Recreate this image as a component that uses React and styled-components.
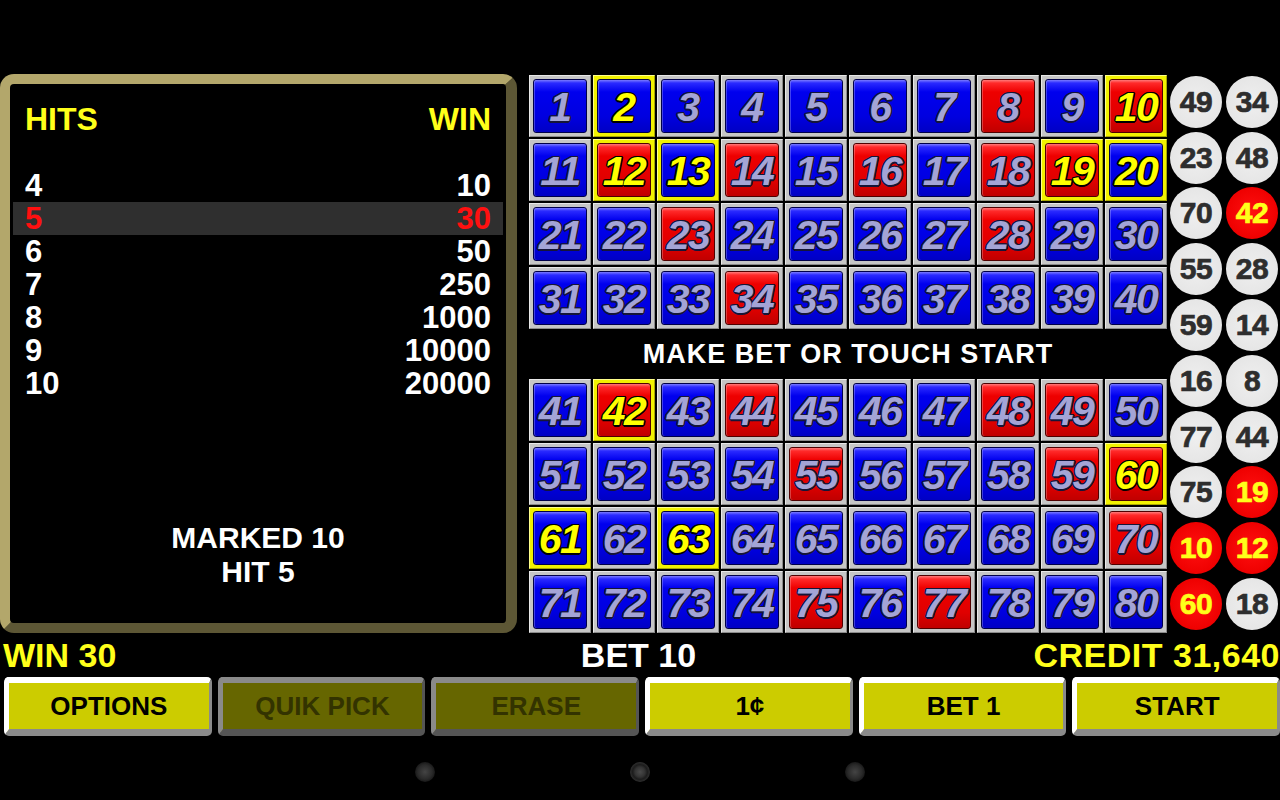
import styled, { createGlobalStyle, css } from 'styled-components';

const marked = [2, 10, 12, 13, 19, 20, 42, 60, 61, 63];
const drawn = [49, 34, 23, 48, 70, 42, 55, 28, 59, 14, 16, 8, 77, 44, 75, 19, 10, 12, 60, 18];

const payTable = [
    [4, 10],
    [5, 30],
    [6, 50],
    [7, 250],
    [8, 1000],
    [9, 10000],
    [10, 20000],
];
const hits = marked.filter(n => drawn.includes(n)).length;

const buttons = [
    { label: 'OPTIONS', off: false },
    { label: 'QUIK PICK', off: true },
    { label: 'ERASE', off: true },
    { label: '1¢', off: false },
    { label: 'BET 1', off: false },
    { label: 'START', off: false },
];

const Global = createGlobalStyle`
    html, body {
        margin: 0;
        padding: 0;
        background: #000;
        overflow: hidden;
    }
    body {
        font-family: 'Liberation Sans', Arial, sans-serif;
    }
`

export default function App() {
    const top = [];
    const bottom = [];
    for (let n = 1; n <= 80; n++) {
        (n <= 40 ? top : bottom).push(n);
    }

    function renderCell(n) {
        const isMarked = marked.includes(n);
        const isDrawn = drawn.includes(n);
        return (
            <Cell key={n} marked={isMarked}>
                <Tile drawn={isDrawn}>
                    <Num marked={isMarked}>{n}</Num>
                </Tile>
            </Cell>
        );
    }

    return (
        <Screen>
            <Global />
            <Main>
                <PayPanel>
                    <PayInner>
                        <PayHead>
                            <span>HITS</span>
                            <span>WIN</span>
                        </PayHead>
                        <PayRows>
                            {payTable.map(([h, w]) => (
                                <PayRow key={h} active={h === hits}>
                                    <span>{h}</span>
                                    <span>{w}</span>
                                </PayRow>
                            ))}
                        </PayRows>
                        <Summary>
                            MARKED {marked.length}
                            <br />
                            HIT {hits}
                        </Summary>
                    </PayInner>
                </PayPanel>

                <Board>
                    <CellGrid>{top.map(renderCell)}</CellGrid>
                    <Message>MAKE BET OR TOUCH START</Message>
                    <CellGrid>{bottom.map(renderCell)}</CellGrid>
                </Board>

                <Balls>
                    {drawn.map(n => (
                        <BallSlot key={n}>
                            <Ball hit={marked.includes(n)}>{n}</Ball>
                        </BallSlot>
                    ))}
                </Balls>
            </Main>

            <Status>
                <WinText>WIN 30</WinText>
                <BetText>BET 10</BetText>
                <CreditText>CREDIT 31,640</CreditText>
            </Status>

            <ButtonBar>
                {buttons.map(b => (
                    <GameButton key={b.label} off={b.off}>{b.label}</GameButton>
                ))}
            </ButtonBar>

            <NavBar>
                <NavDot />
                <NavDot ring />
                <NavDot />
            </NavBar>
        </Screen>
    )
}

const Screen = styled.div`
    width: 1280px;
    height: 800px;
    background: #000;
    overflow: hidden;
`
const Main = styled.div`
    display: flex;
    margin-top: 74px;
    height: 560px;
`
const PayPanel = styled.div`
    width: 517px;
    height: 559px;
    box-sizing: border-box;
    border-style: solid;
    border-width: 10px 11px 10px 10px;
    border-color: #b3a76b #5d5735 #5d5735 #b3a76b;
    border-radius: 14px;
    background: #000;
`
const PayInner = styled.div`
    height: 100%;
    display: flex;
    flex-direction: column;
    padding: 0 3px;
    box-sizing: border-box;
    border-radius: 5px;
    font-weight: 700;
    font-size: 31px;
`
const PayHead = styled.div`
    display: flex;
    justify-content: space-between;
    padding: 0 12px;
    margin-top: 17px;
    height: 36px;
    line-height: 36px;
    color: #ffff1a;
    font-size: 32px;
`
const PayRows = styled.div`
    margin-top: 32px;
    display: flex;
    flex-direction: column;
`
const PayRow = styled.div`
    display: flex;
    justify-content: space-between;
    padding: 0 12px;
    height: 33px;
    line-height: 34px;
    color: ${props => props.active ? '#ff1010' : '#ffffff'};
    background: ${props => props.active ? '#2f2f2f' : 'transparent'};
`
const Summary = styled.div`
    margin-top: auto;
    padding-bottom: 34px;
    text-align: center;
    color: #fff;
    font-size: 30px;
    line-height: 34px;
`
const Board = styled.div`
    margin-left: 11px;
    width: 640px;
    display: flex;
    flex-direction: column;
`
const CellGrid = styled.div`
    display: grid;
    grid-template-columns: repeat(10, 64px);
    grid-auto-rows: 64px;
`
const Cell = styled.div`
    margin: 1px;
    box-sizing: border-box;
    border: 1px solid;
    padding: 3px;
    ${props => props.marked ? css`
        background: #f2f200;
        border-color: #ffff8c #a8a800 #a8a800 #ffff8c;
    ` : css`
        background: #c6c6c6;
        border-color: #e8e8e8 #8a8a8a #8a8a8a #e8e8e8;
    `}
`
const Tile = styled.div`
    height: 100%;
    box-sizing: border-box;
    border: 1px solid ${props => props.drawn ? '#500000' : '#00004a'};
    border-radius: 3px;
    display: flex;
    align-items: center;
    justify-content: center;
    background: ${props => props.drawn
        ? 'linear-gradient(to bottom, #ff7a7a 0px, #ff2a2a 3px, #ee0000 12px, #e00000 70%, #c00000 100%)'
        : 'linear-gradient(to bottom, #7a7aff 0px, #2a2aff 3px, #0000ee 12px, #0000e0 70%, #0000c4 100%)'};
    box-shadow: inset 1px 0 0 rgba(255, 255, 255, 0.25);
`
const Num = styled.span`
    font-style: italic;
    font-weight: 700;
    font-size: 41px;
    letter-spacing: -1.5px;
    line-height: 1;
    margin-top: 2px;
    color: ${props => props.marked ? '#ffff00' : '#a4a4d6'};
    text-shadow: ${props => {
        const c = props.marked ? '#000' : '#151538';
        return `1.5px 0 0 ${c}, -1.5px 0 0 ${c}, 0 1.5px 0 ${c}, 0 -1.5px 0 ${c}, 1px 1px 0 ${c}, -1px -1px 0 ${c}, 1px -1px 0 ${c}, -1px 1px 0 ${c}`;
    }};
`
const Message = styled.div`
    height: 48px;
    line-height: 48px;
    text-align: center;
    color: #fff;
    font-weight: 700;
    font-size: 27px;
    letter-spacing: 1px;
`
const Balls = styled.div`
    width: 112px;
    height: 558px;
    display: grid;
    grid-template-columns: 56px 56px;
    grid-template-rows: repeat(10, 1fr);
`
const BallSlot = styled.div`
    display: flex;
    align-items: center;
    justify-content: center;
`
const Ball = styled.div`
    width: 52px;
    height: 52px;
    border-radius: 50%;
    display: flex;
    align-items: center;
    justify-content: center;
    font-weight: 700;
    font-size: 30px;
    letter-spacing: -0.5px;
    -webkit-text-stroke: 0.7px currentColor;
    color: ${props => props.hit ? '#ffff1a' : '#2e2e2e'};
    background: ${props => props.hit
        ? 'radial-gradient(circle, #ff1010 0%, #ee0000 72%, #b00000 86%, #3a0000 96%, #000 100%)'
        : 'radial-gradient(circle, #efefef 0%, #e6e6e6 70%, #c0c0c0 84%, #5e5e5e 95%, #000 100%)'};
`
const Status = styled.div`
    height: 43px;
    display: grid;
    grid-template-columns: 1fr auto 1fr;
    align-items: center;
    font-weight: 700;
    font-size: 34px;
    padding: 0 0 0 3px;
`
const WinText = styled.div`
    color: #ffff1a;
    justify-self: start;
`
const BetText = styled.div`
    color: #fff;
    margin-left: -6px;
`
const CreditText = styled.div`
    color: #ffff1a;
    justify-self: end;
    letter-spacing: 0.5px;
`
const ButtonBar = styled.div`
    display: flex;
    gap: 6px;
    padding-left: 4px;
    height: 59px;
`
const GameButton = styled.div`
    flex: 1;
    box-sizing: border-box;
    border-style: solid;
    border-width: 6px 3px 7px 5px;
    border-radius: 5px;
    display: flex;
    align-items: center;
    justify-content: center;
    font-weight: 700;
    font-size: 26px;
    ${props => props.off ? css`
        background: #666600;
        border-color: #8a8a8a #555555 #555555 #8a8a8a;
        color: #333300;
    ` : css`
        background: #cccc00;
        border-color: #ffffff #8a8a8a #8a8a8a #ffffff;
        color: #000;
    `}
`
const NavBar = styled.div`
    height: 64px;
    display: flex;
    justify-content: center;
    gap: 195px;
    padding-top: 26px;
    box-sizing: border-box;
`
const NavDot = styled.div`
    width: 20px;
    height: 20px;
    border-radius: 50%;
    background: ${props => props.ring
        ? 'radial-gradient(circle, #4a4a4a 0%, #333 35%, #1c1c1c 52%, #2c2c2c 68%, #000 100%)'
        : 'radial-gradient(circle, #444 0%, #2a2a2a 50%, #000 100%)'};
`
